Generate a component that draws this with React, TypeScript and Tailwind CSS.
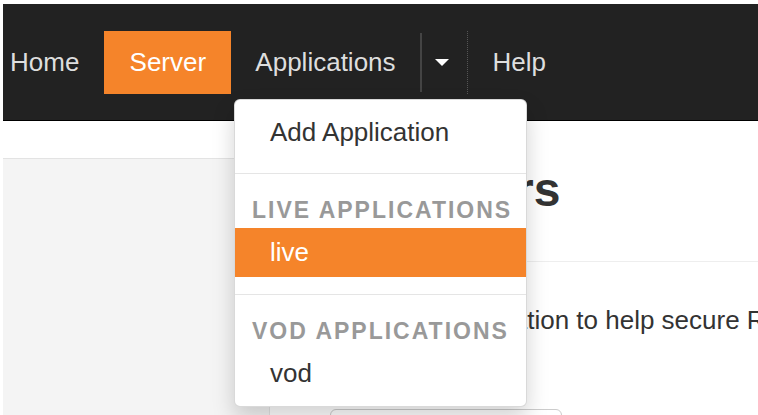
import React from 'react';

const ORANGE = 'bg-[#f5842a]';

const NavItem: React.FC<{ label: string; active?: boolean; className?: string }> = ({ label, active, className }) => (
  <div
    className={`flex items-center h-[63px] text-[26px] ${active ? 'bg-[#f5842a] text-white' : 'text-[#dedede]'} ${className || ''}`}
  >
    {label}
  </div>
);

const AppsDropdown: React.FC = () => (
  <div className="absolute left-[231px] top-[95px] z-10 w-[293px] rounded-[6px] border border-black/15 bg-white py-[8px] shadow-[0_11px_22px_rgba(0,0,0,0.175)]">
    <div className="h-[49px] px-[35px] text-[26px] leading-[49px] text-[#333]">Add Application</div>
    <div className="my-[16px] h-px bg-[#e5e5e5]" />
    <div className="h-[38px] whitespace-nowrap px-[17px] text-[23px] font-bold leading-[40px] tracking-[2px] text-[#999]">LIVE APPLICATIONS</div>
    <div className={`h-[49px] px-[35px] text-[26px] leading-[49px] text-white ${ORANGE}`}>live</div>
    <div className="mt-[17px] mb-[16px] h-px bg-[#e5e5e5]" />
    <div className="h-[38px] whitespace-nowrap px-[17px] text-[23px] font-bold leading-[40px] tracking-[2px] text-[#999]">VOD APPLICATIONS</div>
    <div className="h-[49px] px-[35px] text-[26px] leading-[49px] text-[#333]">vod</div>
  </div>
);

export default function App() {
  return (
    <div className="h-[415px] w-[758px] overflow-hidden bg-white pl-[3px] pt-[4px] font-['Liberation_Sans',Arial,sans-serif]">
      <nav className="relative flex h-[117px] items-center border-b border-black bg-[#222]">
        <NavItem label="Home" className="pl-[7px] pr-[25px]" />
        <NavItem label="Server" active className="w-[127px] justify-center" />
        <NavItem label="Applications" className="px-[24px]" />
        <div className="h-[59px] w-[2px] bg-[#444]" />
        <div className="flex h-[63px] w-[45px] items-center pl-[13px]">
          <div className="h-0 w-0 border-x-[7px] border-t-[7px] border-x-transparent border-t-white" />
        </div>
        <div className="h-[63px] border-l border-dotted border-[#555]" />
        <NavItem label="Help" className="px-[25px]" />
        <AppsDropdown />
      </nav>

      <main className="flex h-[300px]">
        <aside className="mt-[37px] w-[267px] shrink-0 border-r border-t border-[#e3e3e3] bg-[#f4f4f4]" />
        <section className="flex-1 overflow-hidden pl-[45px]">
          <div className="mt-[43px] border-b border-[#eee] pb-[44px]">
            <h1 className="whitespace-nowrap text-[48px] font-bold leading-[1.1] text-[#333]">Publishers</h1>
          </div>
          <p className="ml-[4px] mt-[40px] whitespace-nowrap text-[26px] leading-[37px] text-[#333]">
            Enable authentication to help secure RTMP publishing.
          </p>
          <div className="ml-[15px] mt-[70px] h-[40px] w-[232px] rounded-[6px] border border-[#ccc] bg-white" />
        </section>
      </main>
    </div>
  );
}
